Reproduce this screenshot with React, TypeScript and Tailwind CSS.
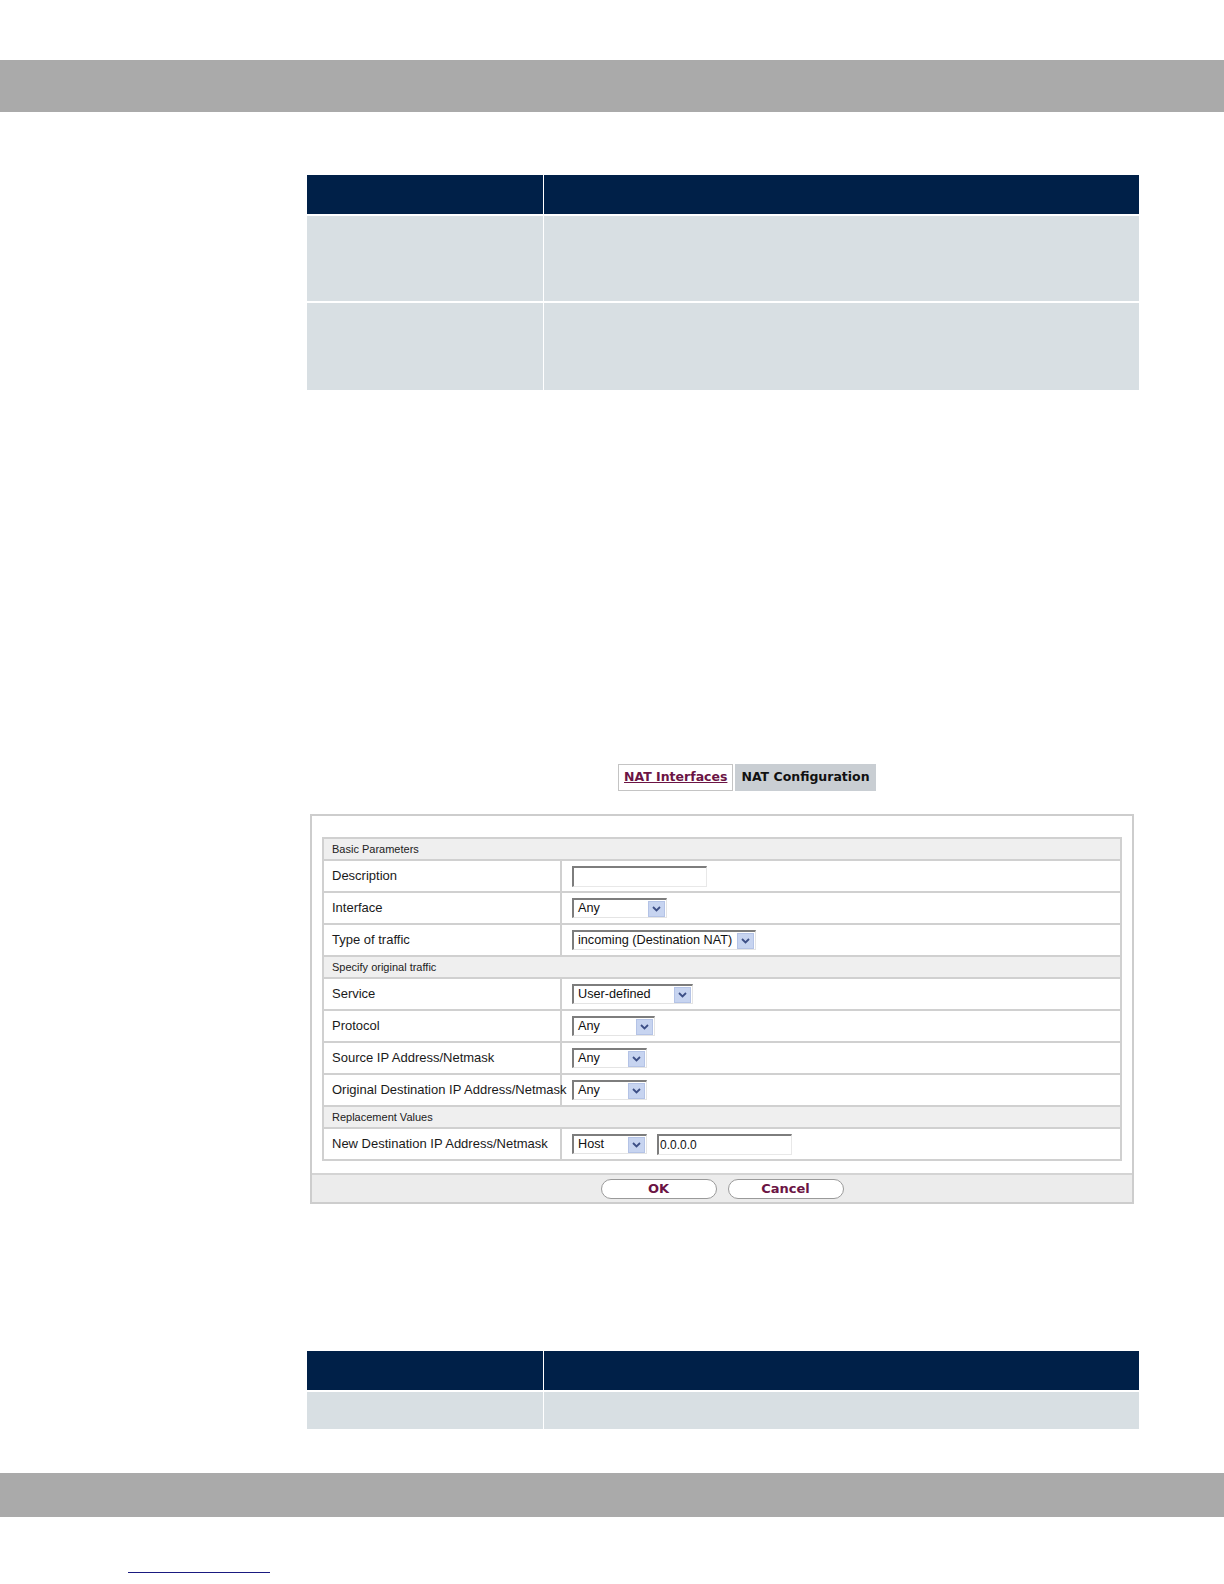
import React from 'react';

const sans = { fontFamily: '"Liberation Sans", Arial, sans-serif' };
const verdana = { fontFamily: '"DejaVu Sans", Verdana, sans-serif' };

function Arrow() {
  return (
    <span className="flex h-[16px] w-[17px] items-center justify-center border border-[#b4c3e6] bg-[#c7d4f0]">
      <svg width="9" height="6" viewBox="0 0 9 6">
        <path d="M1 1 L4.5 4.5 L8 1" fill="none" stroke="#3d4f86" strokeWidth="1.8" />
      </svg>
    </span>
  );
}

function Select({ value, width }: { value: string; width: string }) {
  return (
    <div
      className={`flex h-[20px] items-center justify-between border-t-2 border-l-2 border-t-[#7d7d7d] border-l-[#7d7d7d] border-r border-b border-r-[#e4e4e4] border-b-[#e4e4e4] bg-white pl-[4px] pr-[1px] text-[12.7px] text-[#111] ${width}`}
      style={sans}
    >
      <span className="leading-none">{value}</span>
      <Arrow />
    </div>
  );
}

function TextInput({ value = '' }: { value?: string }) {
  return (
    <div
      className="flex h-[21px] w-[135px] items-center border-t-2 border-l-2 border-t-[#7d7d7d] border-l-[#7d7d7d] border-r border-b border-r-[#e8e8e8] border-b-[#e8e8e8] bg-white pl-[1px] text-[12px] text-[#111]"
      style={sans}
    >
      {value}
    </div>
  );
}

function Section({ title }: { title: string }) {
  return (
    <div className="flex h-[22px] items-center border-b-2 border-[#d0d0d0] bg-[#efefef] pl-[8px] text-[11px] text-[#222]">
      {title}
    </div>
  );
}

function Field({ label, children }: { label: string; children: React.ReactNode }) {
  return (
    <div className="flex h-[32px] border-b-2 border-[#d0d0d0] bg-white">
      <div className="flex w-[238px] shrink-0 items-center whitespace-nowrap border-r-2 border-[#d0d0d0] pl-[8px] text-[13px] text-[#1a1a1a]">
        {label}
      </div>
      <div className="flex items-center gap-[10px] pl-[10px]">{children}</div>
    </div>
  );
}

function InfoTable({ rows }: { rows: number[] }) {
  return (
    <div className="w-[832px]">
      <div className="flex h-[39px] bg-[#002048]">
        <div className="w-[237px] border-r border-white" />
        <div className="flex-1" />
      </div>
      {rows.map((h, i) => (
        <div key={i} className="flex border-t-2 border-white bg-[#d8dfe3]" style={{ height: h }}>
          <div className="w-[237px] border-r border-white" />
          <div className="flex-1" />
        </div>
      ))}
    </div>
  );
}

export default function App() {
  return (
    <div className="min-h-[1584px] w-[1224px] bg-white" style={sans}>
      <div className="h-[60px]" />
      <div className="h-[52px] bg-[#aaaaaa]" />

      <div className="ml-[307px] mt-[63px]">
        <InfoTable rows={[87, 89]} />
      </div>

      {/* tabs */}
      <div className="ml-[618px] mt-[374px] flex h-[27px] gap-[2px]" style={verdana}>
        <div className="flex items-center border border-[#c4c4c4] bg-white px-[5px] text-[12.5px] font-bold text-[#6b1444] underline">
          NAT Interfaces
        </div>
        <div className="flex items-center bg-[#c9ced3] px-[6px] text-[12.5px] font-bold text-[#111]">
          NAT Configuration
        </div>
      </div>

      {/* form panel */}
      <div className="ml-[310px] mt-[23px] w-[824px] border-2 border-[#cdcdcd] bg-white">
        <div className="px-[10px] pb-[12px] pt-[21px]">
          <div className="border-2 border-b-0 border-[#d0d0d0]">
            <Section title="Basic Parameters" />
            <Field label="Description">
              <TextInput />
            </Field>
            <Field label="Interface">
              <Select value="Any" width="w-[95px]" />
            </Field>
            <Field label="Type of traffic">
              <Select value="incoming (Destination NAT)" width="w-[184px]" />
            </Field>
            <Section title="Specify original traffic" />
            <Field label="Service">
              <Select value="User-defined" width="w-[121px]" />
            </Field>
            <Field label="Protocol">
              <Select value="Any" width="w-[83px]" />
            </Field>
            <Field label="Source IP Address/Netmask">
              <Select value="Any" width="w-[75px]" />
            </Field>
            <Field label="Original Destination IP Address/Netmask">
              <Select value="Any" width="w-[75px]" />
            </Field>
            <Section title="Replacement Values" />
            <Field label="New Destination IP Address/Netmask">
              <Select value="Host" width="w-[75px]" />
              <TextInput value="0.0.0.0" />
            </Field>
          </div>
        </div>
        <div className="flex h-[29px] items-center justify-center gap-[11px] border-t-2 border-[#d4d4d4] bg-[#ececec]" style={verdana}>
          <button className="flex h-[20px] w-[116px] items-center justify-center rounded-full border border-[#9a9a9a] bg-white text-[13px] font-bold text-[#6b1444]">
            OK
          </button>
          <button className="flex h-[20px] w-[116px] items-center justify-center rounded-full border border-[#9a9a9a] bg-white text-[13px] font-bold text-[#6b1444]">
            Cancel
          </button>
        </div>
      </div>

      <div className="ml-[307px] mt-[147px]">
        <InfoTable rows={[39]} />
      </div>

      <div className="mt-[44px] h-[44px] bg-[#aaaaaa]" />

      <div className="ml-[128px] mt-[55px] h-[1px] w-[142px] bg-[#1a1a80]" />
    </div>
  );
}
